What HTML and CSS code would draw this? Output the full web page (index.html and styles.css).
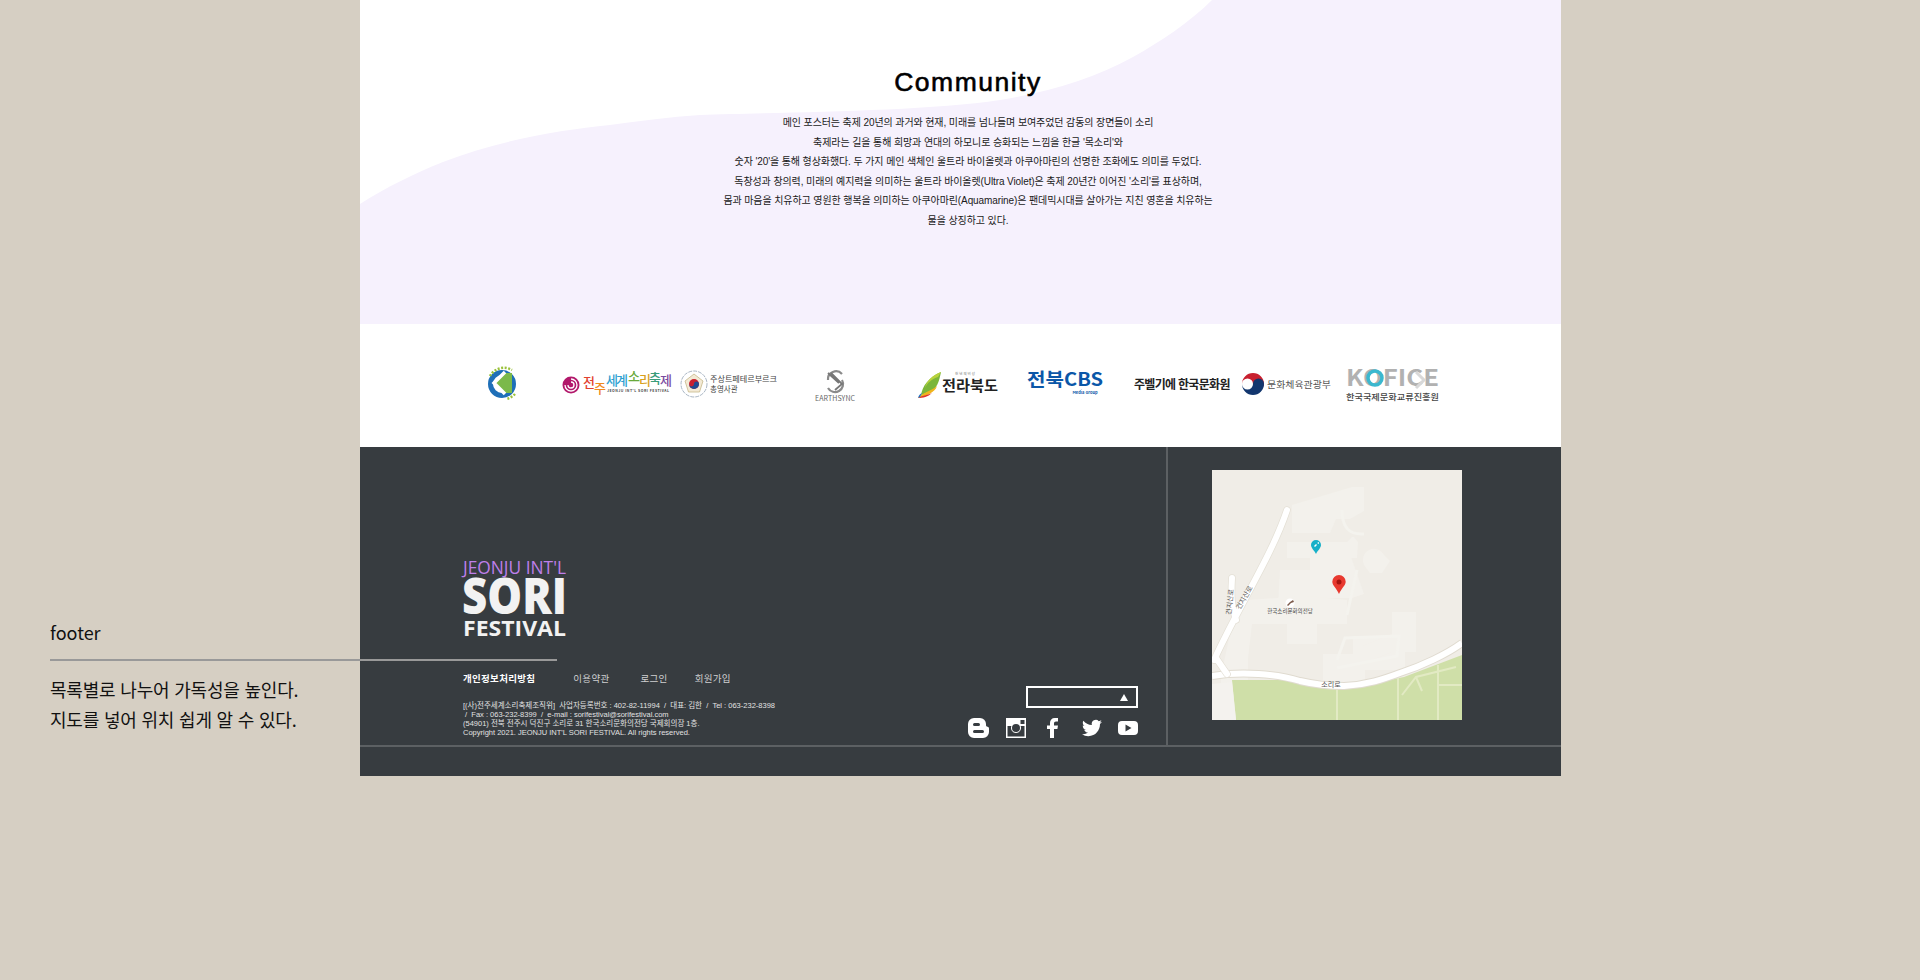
FILE: index.html
```html
<!DOCTYPE html>
<html lang="ko">
<head>
<meta charset="utf-8">
<title>footer</title>
<link rel="stylesheet" href="styles.css">
</head>
<body>
<aside class="note">
  <p class="note-title">footer</p>
  <div class="note-rule"></div>
  <p class="note-text">목록별로 나누어 가독성을 높인다.<br>지도를 넣어 위치 쉽게 알 수 있다.</p>
</aside>
<main class="page">
  <section class="community">
    <svg class="wave" viewBox="0 0 1201 324" preserveAspectRatio="none" aria-hidden="true"><path d="M0 204C25 188 55 173 83 162C140 140 200 130 250 125C280 121 310 117 340 115C420 112 560 112 640 100C690 92 735 78 773 57C800 42 830 22 852 0L1201 0L1201 324L0 324Z"/></svg>
    <div class="community-copy">
      <h2>Community</h2>
      <p>메인 포스터는 축제 20년의 과거와 현재, 미래를 넘나들며 보여주었던 감동의 장면들이 소리<br>축제라는 길을 통해 희망과 연대의 하모니로 승화되는 느낌을 한글 '목소리'와<br>숫자 '20'을 통해 형상화했다. 두 가지 메인 색체인 울트라 바이올렛과 아쿠아마린의 선명한 조화에도 의미를 두었다.<br>독창성과 창의력, 미래의 예지력을 의미하는 울트라 바이올렛(Ultra Violet)은 축제 20년간 이어진 '소리'를 표상하며,<br>몸과 마음을 치유하고 영원한 행복을 의미하는 아쿠아마린(Aquamarine)은 팬데믹시대를 살아가는 지친 영혼을 치유하는<br>물을 상징하고 있다.</p>
    </div>
  </section>

  <section class="partners">
    <svg class="logo l1" viewBox="0 0 40 40"><circle cx="20" cy="20" r="11.500" fill="none" stroke="#1e6fb8" stroke-width="5"/><path d="M20 9l10 0 0 20-10 0-8-10z" fill="#7bb94a"/><path d="M23 8L12 19l11 11" fill="none" stroke="#fff" stroke-width="3.500"/><path d="M8 12A16 16 0 0 1 30 6M33 30A16 16 0 0 1 24 35" fill="none" stroke="#9bc23c" stroke-width="2.500" stroke-dasharray="2 1.500"/></svg>
    <svg class="logo l2" viewBox="0 0 110 30"><circle cx="10" cy="16" r="8.500" fill="#b2186b"/><path d="M10 10a6 6 0 1 1-6 6M10 13a3 3 0 1 1-3 3" fill="none" stroke="#fff" stroke-width="1.300"/><text x="22" y="18" class="t-fest" fill="#e2412f">전</text><text x="33" y="24" class="t-fest" fill="#f08a1c">주</text><text x="45" y="16" class="t-fest t-narrow" fill="#2f9fd0">세계</text><text x="67" y="12" class="t-fest" fill="#69a93a">소</text><text x="78" y="16" class="t-fest" fill="#d9a11d">리</text><text x="88" y="14" class="t-fest" fill="#3a9c7a">축</text><text x="99" y="16" class="t-fest" fill="#7a4aa0">제</text><text x="46" y="23" class="t-mini" fill="#444" textLength="62">JEONJU INT'L SORI FESTIVAL</text></svg>
    <svg class="logo l3" viewBox="0 0 98 30"><circle cx="14" cy="15" r="13" fill="none" stroke="#a9b6c4" stroke-width="1" stroke-dasharray="4 1"/><path d="M14 5l9 7-3.500 11h-11L5 12z" fill="#f3ead6" stroke="#c7b98a" stroke-width=".8"/><circle cx="14" cy="15" r="5" fill="#c8202f"/><path d="M9 15a5 5 0 0 0 10 0 2.500 2.500 0 0 0-5 0 2.500 2.500 0 0 1-5 0z" fill="#1f4b92"/><text x="30" y="13" class="t-org" textLength="67" lengthAdjust="spacingAndGlyphs">주상트페테르부르크</text><text x="30" y="23" class="t-org">총영사관</text></svg>
    <svg class="logo l4" viewBox="0 0 40 36"><path d="M13 14a8 8 0 0 1 14-6M27 14a8 8 0 0 1-14 8" fill="none" stroke="#8a8a8a" stroke-width="2.200"/><path d="M16 7l11 11-7 6M24 17L13 7" fill="none" stroke="#777" stroke-width="1.800"/><text x="0" y="35" textLength="40" class="t-earth">EARTHSYNC</text></svg>
    <svg class="logo l5" viewBox="0 0 84 30"><path d="M26 3C24 13 22 20 14 23C11 24 8 25 6 27C7 17 14 8 26 3z" fill="#7cb63a"/><path d="M26 3L23 8C17 10 12 14 10 19C11 12 18 6 26 3z" fill="#b8d23c"/><path d="M3 29C8 23 15 23 22 17C20 24 10 27 3 29z" fill="#f0b41c"/><path d="M3 29C8 26 13 26 17 24C13 28 8 29 3 29z" fill="#e0352b"/><path d="M3 29C4 26 5 25 7 24L5 28z" fill="#1f6fc0"/><text x="40" y="6" class="t-tiny" fill="#777">천 년 의 비 상</text><text x="27" y="22" class="t-jb" textLength="56" lengthAdjust="spacingAndGlyphs">전라북도</text></svg>
    <svg class="logo l6" viewBox="0 0 78 28"><text x="0" y="16" class="t-cbs" textLength="76" lengthAdjust="spacingAndGlyphs">전북CBS</text><text x="58" y="24" class="t-media" text-anchor="middle">Media Group</text></svg>
    <div class="logo l7">주벨기에 한국문화원</div>
    <svg class="logo l8" viewBox="0 0 92 26"><path d="M13 2a11 11 0 0 1 11 11 5.500 5.500 0 0 1-11 0 5.500 5.500 0 0 0-11 0A11 11 0 0 1 13 2z" fill="#c8202f"/><path d="M2 13a5.500 5.500 0 0 0 11 0 5.500 5.500 0 0 1 11 0 11 11 0 0 1-22 0z" fill="#12366e"/><text x="27" y="17" class="t-moc" textLength="64" lengthAdjust="spacingAndGlyphs">문화체육관광부</text></svg>
    <svg class="logo l9" viewBox="0 0 94 36"><text x="0" y="20" class="t-kofice" fill="#b1b1b1" textLength="93" lengthAdjust="spacingAndGlyphs">KOFICE</text><circle cx="29" cy="12" r="7" fill="none" stroke="#3bb8cf" stroke-width="3.500"/><path d="M70 6l8 8-8 8" fill="none" stroke="#d8d8d8" stroke-width="3"/><text x="0" y="34" class="t-kofice-sub" textLength="93" lengthAdjust="spacingAndGlyphs">한국국제문화교류진흥원</text></svg>
  </section>

  <footer class="footer">
    <div class="footer-top">
      <div class="footer-left">
        <div class="brand">
          <svg class="brand-logo" viewBox="0 0 104 76" role="img" aria-label="Jeonju Int'l Sori Festival">
            <text x="0" y="13" class="b-small" textLength="103" lengthAdjust="spacingAndGlyphs">JEONJU INT'L</text>
            <text x="-1" y="53" class="b-sori" textLength="105" lengthAdjust="spacingAndGlyphs">SORI</text>
            <text x="0" y="75" class="b-fest" textLength="103" lengthAdjust="spacingAndGlyphs">FESTIVAL</text>
          </svg>
          <nav class="links">
            <a class="link-strong">개인정보처리방침</a>
            <a class="link-a">이용약관</a>
            <a class="link-b">로그인</a>
            <a class="link-c">회원가입</a>
          </nav>
          <address class="address">[(사)전주세계소리축제조직위]&nbsp; 사업자등록번호 : 402-82-11994 &nbsp;/&nbsp; 대표: 김한 &nbsp;/&nbsp; Tel : 063-232-8398<br>&nbsp;/&nbsp; Fax : 063-232-8399 &nbsp;/&nbsp; e-mail : sorifestival@sorifestival.com<br>(54901) 전북 전주시 덕진구 소리로 31 한국소리문화의전당 국제회의장 1층.<br>Copyright 2021. JEONJU INT'L SORI FESTIVAL. All rights reserved.</address>
        </div>
        <div class="social">
          <div class="select"><span class="select-arrow"></span></div>
          <div class="icons">
            <svg class="ic ic-blog" viewBox="0 0 21 20"><path fill-rule="evenodd" d="M6 0h6a6 6 0 0 1 6 6v1c0 1 .5 1.500 1.500 1.700.9.2 1.500.8 1.500 1.800V14a6 6 0 0 1-6 6H6a6 6 0 0 1-6-6V6a6 6 0 0 1 6-6zM6.500 5a1.500 1.500 0 0 0 0 3h4a1.500 1.500 0 0 0 0-3zM6.500 12a1.500 1.500 0 0 0 0 3h8a1.500 1.500 0 0 0 0-3z"/></svg>
            <svg class="ic ic-insta" viewBox="0 0 20 20"><path fill-rule="evenodd" d="M0 0h20v20H0zM1.500 8v10.500h17V8h-3.900a5 5 0 1 1-9.200 0zM10 6a4 4 0 1 0 0 8 4 4 0 0 0 0-8zM14.500 2v4h4V2z"/></svg>
            <svg class="ic ic-fb" viewBox="0 0 11 20"><path d="M3 20V11H0V7.500h3V5c0-3 1.800-5 4.800-5H11v3.500H9C7.600 3.500 7 4.200 7 5.500v2h4l-.6 3.500H7v9z"/></svg>
            <svg class="ic ic-tw" viewBox="0 0 24 24"><path d="M23.950 4.570a10 10 0 0 1-2.820.770 4.960 4.960 0 0 0 2.160-2.720c-.950.550-2 .950-3.120 1.180a4.920 4.920 0 0 0-8.380 4.480C7.690 8.090 4.070 6.130 1.640 3.160a4.820 4.820 0 0 0-.670 2.480c0 1.710.870 3.210 2.190 4.100a4.900 4.900 0 0 1-2.230-.620v.060a4.920 4.920 0 0 0 3.950 4.830 5 5 0 0 1-2.210.080 4.940 4.940 0 0 0 4.600 3.420A9.870 9.870 0 0 1 0 19.540a14 14 0 0 0 7.560 2.210c9.050 0 14-7.500 14-13.980 0-.210 0-.420-.020-.630a9.940 9.940 0 0 0 2.410-2.570z"/></svg>
            <svg class="ic ic-yt" viewBox="0 0 20 14"><path fill-rule="evenodd" d="M4 0h12a4 4 0 0 1 4 4v6a4 4 0 0 1-4 4H4a4 4 0 0 1-4-4V4a4 4 0 0 1 4-4zM7.500 3.500v7l6-3.500z"/></svg>
          </div>
        </div>
      </div>
      <div class="footer-right">
        <svg class="map" viewBox="0 0 250 250" role="img" aria-label="map">
          <rect width="250" height="250" fill="#f0ede7"/>
          <g fill="#f3f1ec">
            <path d="M80 35l60-18 12 0 0 24-14 8-14 0-6 14-38 0z"/>
            <path d="M75 72h60l5-5h2l4 5 -1 16-70 0z"/>
            <path d="M68 100h30l0-16 40 0 14 40-12 4-45 0-4 8H66z"/>
            <path d="M35 130l60-4 40 4 0 24-30 0 0 20-30 0 0-20H40l-4 34 0 22-10 0 0 10 25-10 60 0 0-26 30 0 0-18 40 0 0-10 12 0 0 44-40 0 0 16-40 16-90 0-4-10-10 4 0-20 12-56z"/>
            <path d="M150 176l30-12 0-22 24 0 0 40-24 0-30 12z"/>
            <path d="M152 95a10 10 0 0 1 20-10l6 6-8 12-12 0z"/>
          </g>
          <path d="M145 100L135 145M125 190l8-22 54-2-2 20-60 12M130 40c0 16 6 25 22 24" fill="none" stroke="#f4f3ee" stroke-width="3"/>
          <path d="M20 210l60 0 52 9 60-12 58-22v65H24z" fill="#cfdfa8"/>
          <path d="M125 218v32M186 208v42M226 195v55M190 225l14-18 40-10M204 207l6 14M226 215h24" fill="none" stroke="#e2eac3" stroke-width="2"/>
          <path d="M0 250v-36l20-2 4 38z" fill="#f4f2ee"/>
          <path d="M0 206C30 201 65 204 88 211C105 215 120 216 132 216C155 215 172 209 188 203C210 196 235 184 250 173" fill="none" stroke="#e0dbd0" stroke-width="8"/>
          <path d="M0 206C30 201 65 204 88 211C105 215 120 216 132 216C155 215 172 209 188 203C210 196 235 184 250 173" fill="none" stroke="#fff" stroke-width="6"/>
          <path d="M75 40C60 85 30 130 2 190M20 108C19 125 19 135 24 150M4 188L15 204" fill="none" stroke="#e4e0d6" stroke-width="7.500" stroke-linecap="round"/>
          <path d="M75 40C60 85 30 130 2 190M20 108C19 125 19 135 24 150M4 188L15 204" fill="none" stroke="#fff" stroke-width="6" stroke-linecap="round"/>
          <text x="119" y="217" class="m-road" text-anchor="middle">소리로</text>
          <text class="m-road" transform="translate(28 140) rotate(-60)">건지산로</text>
          <text class="m-road" transform="translate(19 145) rotate(-84)">건지산로</text>
          <circle cx="78" cy="133" r="4.500" fill="#fff"/><path d="M75 135l3-3 1 1-3 3zM78 132l3-2 1 2-3 1z" fill="#7c5a4a"/>
          <text x="78" y="143" class="m-poi" text-anchor="middle">한국소리문화의전당</text>
          <path d="M104 70a5 5 0 0 1 5 5c0 3-3 5-5 9-2-4-5-6-5-9a5 5 0 0 1 5-5z" fill="#17b0c8"/><path d="M102 76l2-2 1 1-2 2zM105 73l2-1 0 2z" fill="#fff"/>
          <path d="M127 105a6.700 6.700 0 0 1 6.700 6.700c0 3.800-4.300 6.300-6.700 12.300-2.400-6-6.700-8.500-6.700-12.300A6.700 6.700 0 0 1 127 105z" fill="#e8392f"/><circle cx="127" cy="112" r="2.500" fill="#a5140f"/>
        </svg>
      </div>
    </div>
  </footer>
</main>
</body>
</html>
```

FILE: styles.css
```css
* { box-sizing: border-box; }
html, body { margin: 0; height: 980px; overflow: hidden; }
body { background: #d6cfc3; font-family: "Noto Sans CJK KR", "Noto Sans", sans-serif; }

.page { width: 1201px; margin-left: 360px; background: #fff; }

/* annotation */
.note { position: absolute; left: 50px; top: 616px; z-index: 2; color: #111; font-size: 18px; }
.note-title { margin: 0; line-height: 32px; }
.note-rule { width: 507px; height: 2px; background: #999; margin-top: 11px; }
.note-text { margin: 13px 0 0; line-height: 30px; letter-spacing: -.2px; }

/* community */
.community { position: relative; height: 324px; overflow: hidden; }
.wave { position: absolute; inset: 0; width: 100%; height: 100%; }
.wave path { fill: #f6f1fd; }
.community-copy { position: relative; text-align: center; padding-top: 65px; padding-left: 15px; }
.community-copy h2 { margin: 0; font: 400 26.500px/34px "Liberation Sans", Arial, sans-serif; letter-spacing: 1.5px; -webkit-text-stroke: .6px #000; color: #000; }
.community-copy p { margin: 14px 0 0; font-family: "Liberation Sans", "Noto Sans CJK KR", sans-serif; font-size: 10px; line-height: 19.6px; letter-spacing: -.1px; color: #1a1a1a; }

/* partners */
.partners { height: 123px; display: flex; align-items: center; padding: 0 0 4px 122px; }
.logo { flex: none; display: block; overflow: visible; }
.l1 { width: 40px; height: 40px; }
.l2 { width: 110px; height: 30px; margin-left: 39px; }
.l3 { width: 98px; height: 30px; margin-left: 9px; }
.l4 { width: 40px; height: 36px; margin-left: 37px; }
.l5 { width: 84px; height: 30px; margin-left: 60px; }
.l6 { width: 78px; height: 28px; margin-left: 28px; }
.l7 { width: 100px; margin-left: 29px; font-size: 12px; font-weight: 700; letter-spacing: -.7px; white-space: nowrap; color: #222; }
.l8 { width: 92px; height: 26px; margin-left: 6px; }
.l9 { width: 94px; height: 36px; margin-left: 14px; }
.partners text { font-family: "Noto Sans CJK KR", "Noto Sans", sans-serif; }
.t-fest { font-size: 13px; font-weight: 500; }
.t-narrow { letter-spacing: -2px; }
.t-mini { font-size: 3.500px; font-weight: 700; }
.t-org { font-size: 7.500px; fill: #444; }
.t-earth { font-size: 7px; fill: #666; }
.t-tiny { font-size: 3.500px; }
.t-jb { font-size: 15px; font-weight: 700; fill: #222; }
.t-cbs { font-size: 18px; font-weight: 700; fill: #0b57a8; }
.t-media { font-size: 4px; font-weight: 700; fill: #0b57a8; }
.t-moc { font-size: 9.500px; fill: #555; }
.t-kofice { font-size: 22px; font-weight: 700; }
.t-kofice-sub { font-size: 8.500px; font-weight: 500; fill: #444; }

/* footer */
.footer { height: 329px; background: #373c40; color: #fff; }
.footer-top { height: 300px; display: flex; border-bottom: 2px solid #5c6063; }
.footer-left { width: 808px; display: flex; justify-content: space-between; border-right: 2px solid #5c6063; padding: 0 28px 7px 103px; }
.brand { padding-top: 114px; }
.brand-logo { display: block; width: 104px; height: 76px; overflow: visible; }
.brand-logo text { font-family: "Open Sans", sans-serif; fill: #f2f2f2; }
.brand-logo .b-small { font-size: 17.500px; font-weight: 400; fill: #bf7fea; }
.brand-logo .b-sori { font-size: 50px; font-weight: 800; }
.brand-logo .b-fest { font-size: 22px; font-weight: 700; }

.links { display: flex; margin-top: 33px; font-size: 9.500px; line-height: 16px; color: #cfd0d1; white-space: nowrap; letter-spacing: .3px; }
.link-strong { font-weight: 700; color: #fff; }
.link-a { margin-left: 38px; }
.link-b { margin-left: 31px; }
.link-c { margin-left: 27px; }

.address { margin-top: 15px; font-family: "Liberation Sans", "Noto Sans CJK KR", sans-serif; font-style: normal; font-size: 7.500px; line-height: 9px; color: #e2e2e2; white-space: nowrap; }

.social { display: flex; flex-direction: column; align-items: flex-end; justify-content: flex-end; }
.select { position: relative; width: 112px; height: 22px; border: 2px solid #fff; }
.select-arrow { position: absolute; right: 8px; top: 6px; border: 4.500px solid transparent; border-top: 0; border-bottom: 7px solid #fff; }
.icons { display: flex; align-items: center; margin-top: 10px; height: 20px; }
.ic { display: block; fill: #fff; flex: none; }
.ic-blog { width: 21px; height: 20px; }
.ic-insta { width: 20px; height: 20px; margin-left: 17px; }
.ic-fb { width: 11px; height: 20px; margin-left: 21px; }
.ic-tw { width: 20px; height: 20px; margin-left: 24px; }
.ic-yt { width: 20px; height: 14px; margin-left: 16px; }

.footer-right { flex: 1; padding: 23px 0 0 44px; }
.map { display: block; width: 250px; height: 250px; }
.map text { font-family: "Noto Sans CJK KR", sans-serif; }
.m-road { font-size: 7px; fill: #555; }
.m-poi { font-size: 5.500px; fill: #444; }
```
